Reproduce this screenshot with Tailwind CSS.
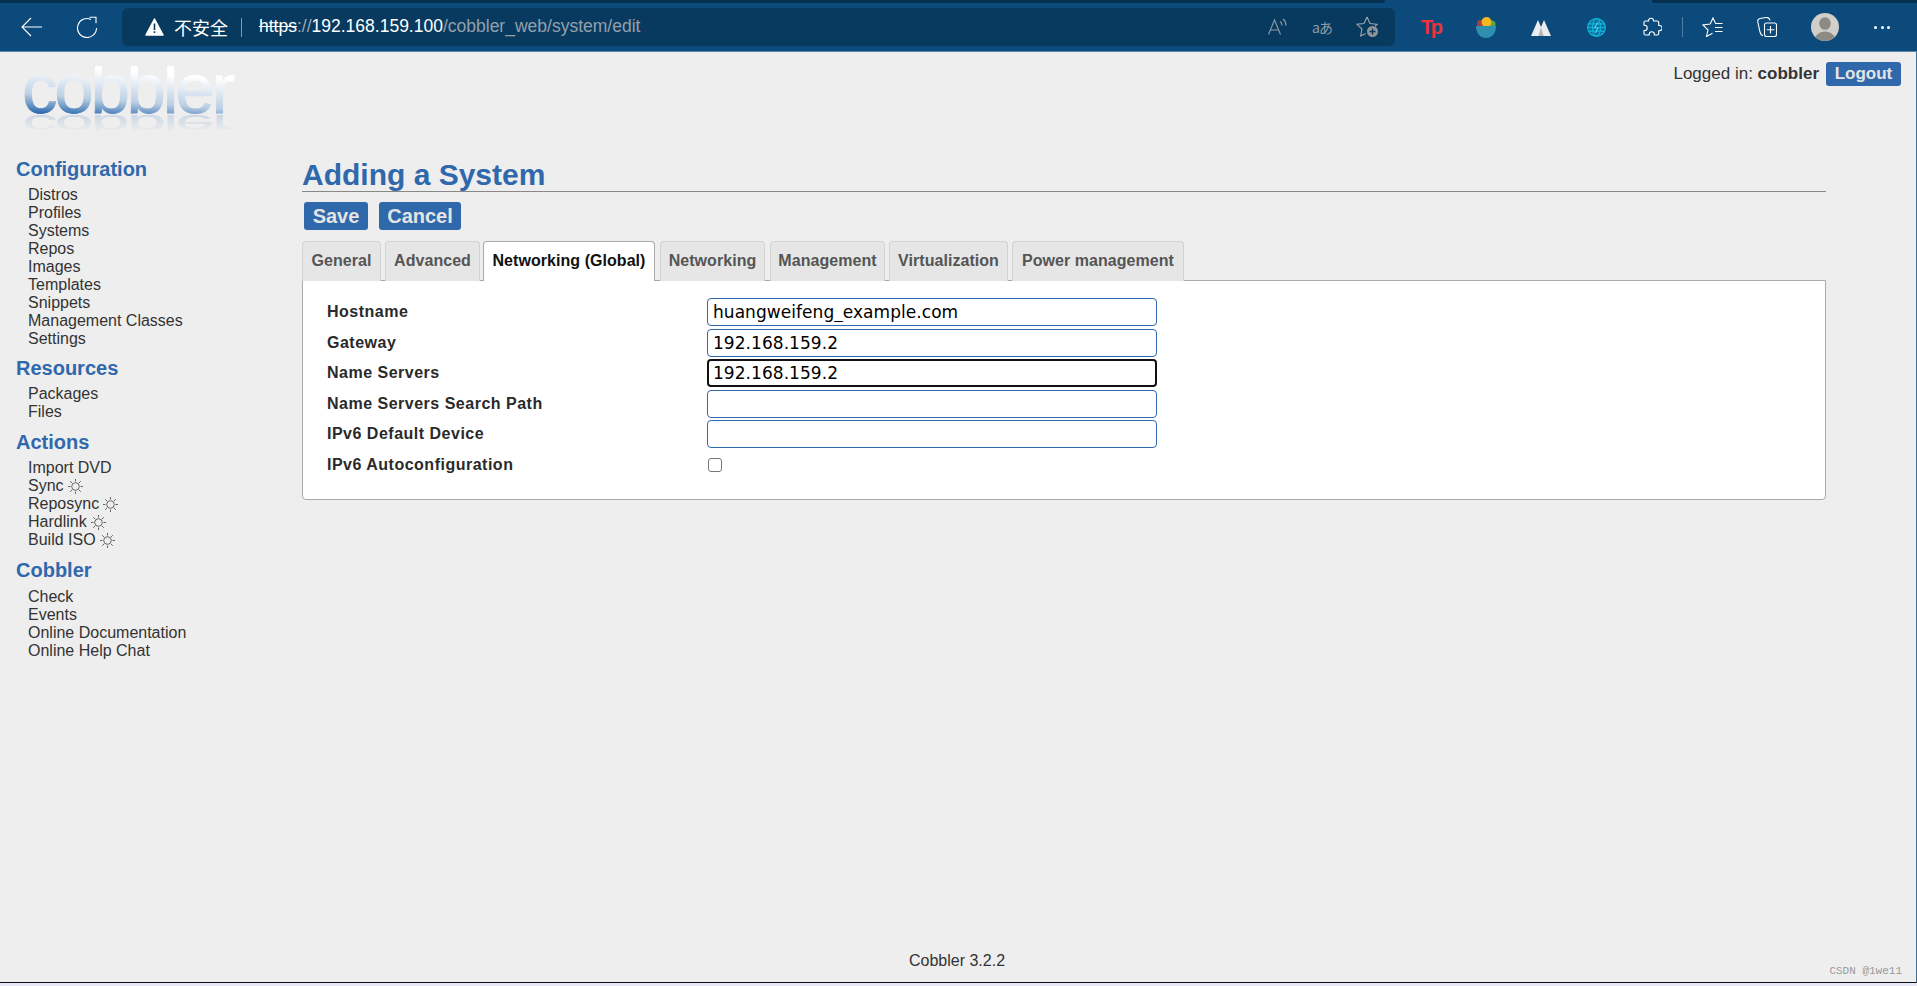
<!doctype html>
<html lang="zh">
<head>
<meta charset="utf-8">
<title>Adding a System</title>
<script src="https://cdn.jsdelivr.net/npm/@tailwindcss/browser@4"></script>
</head>
<body class="h-[986px] w-[1917px] overflow-hidden bg-[#eeeeee] font-['Liberation_Sans',Arial,sans-serif] text-[#333333]">
<div class="flex h-[986px] flex-col">
  <!-- browser chrome -->
  <header class="relative flex h-[52px] shrink-0 items-center border-b border-[#5d86a8] bg-[#0c4a7c] pt-[3px]">
    <div class="absolute left-0 top-0 h-[3px] w-[1385px] rounded-br-md bg-[#06304f]"></div>
    <div class="absolute right-0 top-0 h-[3px] w-[265px] rounded-bl-md bg-[#06304f]"></div>
    <div class="flex w-[122px] shrink-0 items-center pl-[21px]">
      <svg class="h-[20px] w-[21px]" viewBox="0 0 21 20" fill="none" stroke="#fff" stroke-width="1.1"><path d="M21 10H1M10 1L1 10l9 9"/></svg>
      <svg class="ml-[34px] h-[22px] w-[22px]" viewBox="0 0 22 22" fill="none" stroke="#fff" stroke-width="1.1"><path d="M20.500 12A9.500 9.500 0 1 1 15 3.400"/><path d="M13.500 1.200h6.500v6"/></svg>
    </div>
    <div class="flex h-[38px] w-[1273px] shrink-0 items-center rounded-md bg-[#083a60] pl-[23px] pr-[16px]">
      <svg class="h-[18px] w-[19px]" viewBox="0 0 19 18"><path fill="#fff" stroke="#fff" stroke-linejoin="round" stroke-width="1.500" d="M9.500 1L18 17H1Z"/><path fill="#083a60" d="M8.700 5.500h1.600v6.500H8.700zM8.700 13.200h1.600v1.800H8.700z"/></svg>
      <span class="ml-[10px] font-['Noto_Sans_CJK_SC',sans-serif] text-[18px] leading-none text-white">不安全</span>
      <span class="ml-[13px] h-[19px] w-px bg-[#7f9bb2]"></span>
      <span class="ml-[17px] whitespace-nowrap text-[17.500px] leading-none"><span class="text-white line-through">https</span><span class="text-[#9aa7b3]">://</span><span class="text-white">192.168.159.100</span><span class="text-[#93a0ac]">/cobbler_web/system/edit</span></span>
      <div class="ml-auto flex items-center">
        <svg class="h-[18px] w-[20px]" viewBox="0 0 20 18" fill="none" stroke="#8f9ca6" stroke-width="1.100"><path d="M0.500 16.500L6.500 2l6 14.500M2.500 12h8"/><path d="M12 3.500c1.500 1 2 2.500 2 4M15 1c2 1.500 3 4 3 6.500"/></svg>
        <span class="ml-[24px] w-[21px] whitespace-nowrap font-['Noto_Sans_CJK_JP',sans-serif] text-[14px] leading-none tracking-[-1px] text-[#8f9ca6]">aあ</span>
        <svg class="ml-[23px] h-[22px] w-[23px]" viewBox="0 0 23 22" fill="none" stroke="#a0a8ae" stroke-width="1.100"><path d="M11 1l-3 6.500-7 .8 5 4.700-1.400 7 5-2.500M11 1l3 6.500 7 .8-2 2"/><circle cx="16.500" cy="15.500" r="5.500" fill="#8f9499" stroke="none"/><path d="M16.500 12.500v6M13.500 15.500h6" stroke="#083a60" stroke-width="1.400"/></svg>
      </div>
    </div>
    <div class="flex flex-1 items-center">
      <span class="ml-[26px] w-[20px] whitespace-nowrap text-[20px] font-bold leading-none tracking-[-2.500px] text-[#ee3338]">Tp</span>
      <svg class="ml-[35px] h-[21px] w-[20px]" viewBox="0 0 20 21"><circle cx="5" cy="7" r="4" fill="#a8433f"/><circle cx="16" cy="7" r="3.500" fill="#5aa845"/><circle cx="10.500" cy="5" r="5" fill="#f2b81e"/><path fill="#2f8fae" d="M0 9h20c0 6-3 12-10 12S0 15 0 9z"/></svg>
      <svg class="ml-[35px] h-[17px] w-[20px]" viewBox="0 0 20 17"><path fill="#ececec" d="M0 17L7 1l3 7 3-7 7 16z"/><path fill="#b4b4b4" d="M7.500 17L10 8l2.500 9z"/></svg>
      <svg class="ml-[36px] h-[19px] w-[19px]" viewBox="0 0 19 19" fill="none" stroke="#10b4d8" stroke-width="1.200"><circle cx="9.500" cy="9.500" r="8.800" fill="#0c6f9e"/><ellipse cx="9.500" cy="9.500" rx="4" ry="8.800"/><path d="M1.500 5.800h16M1.500 13.200h16M0.700 9.500h17.600"/><path d="M11 4L7.500 10h3.500L8.500 15" stroke="#3fd0ee"/></svg>
      <svg class="ml-[36px] h-[20px] w-[20px]" viewBox="0 0 20 20" fill="none" stroke="#fff" stroke-width="1.100"><path d="M9 1.200c1.800 0 2.600 1.400 2.600 2.800h3.600a1.500 1.500 0 0 1 1.500 1.500v3h.8a2.600 2.600 0 0 1 0 5.200h-.8v2.800a1.500 1.500 0 0 1-1.500 1.500h-2.800v-.6a2.600 2.600 0 0 0-5.200 0v.6H3.500A1.500 1.500 0 0 1 2 16.500v-3h.6a2.600 2.600 0 0 0 0-5.200H2V5.500A1.500 1.500 0 0 1 3.500 4h3c0-1.400.7-2.800 2.500-2.800z"/></svg>
      <span class="ml-[20px] h-[20px] w-px bg-[#4f7da3]"></span>
      <svg class="ml-[19px] h-[20px] w-[21px]" viewBox="0 0 21 20" fill="none" stroke="#fff" stroke-width="1.100"><path d="M8.200 7L11 1l2.800 6M8.200 7L1 8l5 5-1.500 6.500 6-3.200"/><path d="M13 6.500h7.500M13 10.500h7.500M13 14.500h7.500"/></svg>
      <svg class="ml-[34px] h-[20px] w-[20px]" viewBox="0 0 20 20" fill="none" stroke="#fff" stroke-width="1.100"><path d="M6 18.800C4 18.300 3.500 17 3 15L.8 5C.5 3 1.500 1.800 3 1.500l6-1c2-.3 3.500.5 4 3"/><rect x="7.500" y="6" width="12" height="13.500" rx="2"/><path d="M13.500 9v7.500M9.800 12.700h7.500"/></svg>
      <span class="ml-[34px] h-[28px] w-[28px] overflow-hidden rounded-full bg-[#d1cfc9]"><svg class="h-[28px] w-[28px]" viewBox="0 0 28 28"><ellipse cx="14" cy="10.500" rx="5.800" ry="6.300" fill="#8d8a84"/><ellipse cx="14" cy="25" rx="9.500" ry="6.500" fill="#8d8a84"/></svg></span>
      <span class="ml-[35px] flex gap-[3.500px]"><i class="h-[3px] w-[3px] rounded-full bg-white"></i><i class="h-[3px] w-[3px] rounded-full bg-white"></i><i class="h-[3px] w-[3px] rounded-full bg-white"></i></span>
    </div>
  </header>

  <!-- page -->
  <div class="relative flex min-h-0 flex-1 flex-col border-r border-b border-r-[#3e6f96] border-b-[#111111]">
    <div class="flex h-[78px] shrink-0 justify-between">
      <svg class="ml-[16px] mt-[14px] h-[72px] w-[224px]" viewBox="0 0 224 72">
        <defs>
          <linearGradient id="lg" x1="0.2" y1="0" x2="0" y2="1"><stop offset="0.22" stop-color="#ffffff"/><stop offset="0.58" stop-color="#bcd0e4"/><stop offset="0.8" stop-color="#2f6cb0"/></linearGradient>
          <linearGradient id="lr" x1="0" y1="1" x2="0" y2="0"><stop offset="0.2" stop-color="#ccd8e5"/><stop offset="0.75" stop-color="#eeeeee"/></linearGradient>
        </defs>
        <text x="6" y="47" font-family="Liberation Sans" font-size="71" letter-spacing="-3.300" stroke="url(#lg)" stroke-width="0.800" fill="url(#lg)">cobbler</text>
        <text transform="translate(0 68) scale(1 -0.4)" x="6" y="48" font-family="Liberation Sans" font-size="71" letter-spacing="-3.300" fill="url(#lr)">cobbler</text>
      </svg>
      <div class="mr-[15px] mt-[10px] flex h-[24px] items-center text-[17px]">
        <span>Logged in: <b>cobbler</b></span>
        <a class="ml-[7px] flex h-[24px] w-[75px] items-center justify-center rounded-[3px] bg-[#3068ac] font-bold text-[#e4e4e4]">Logout</a>
      </div>
    </div>
    <div class="flex min-h-0 flex-1">
      <nav class="w-[302px] shrink-0 pl-[16px] pt-[27px]">
        <h2 class="text-[20px] font-bold leading-[24px] text-[#3068ac]">Configuration</h2>
        <ul class="pl-[12px] pt-[5px] text-[16px] leading-[18px]">
          <li>Distros</li><li>Profiles</li><li>Systems</li><li>Repos</li><li>Images</li><li>Templates</li><li>Snippets</li><li>Management Classes</li><li>Settings</li>
        </ul>
        <h2 class="mt-[8px] text-[20px] font-bold leading-[24px] text-[#3068ac]">Resources</h2>
        <ul class="pl-[12px] pt-[5px] text-[16px] leading-[18px]">
          <li>Packages</li><li>Files</li>
        </ul>
        <h2 class="mt-[9px] text-[20px] font-bold leading-[24px] text-[#3068ac]">Actions</h2>
        <ul class="pl-[12px] pt-[5px] text-[16px] leading-[18px]">
          <li>Import DVD</li>
          <li class="flex items-center gap-[4px]">Sync <svg class="h-[15px] w-[15px]" viewBox="0 0 15 15" fill="none" stroke="#555" stroke-width="0.900"><circle cx="7.500" cy="7.500" r="3.800"/><path d="M7.500 0v2.500M7.500 12.500V15M0 7.500h2.500M12.500 7.500H15M2.200 2.200L4 4M11 11l1.800 1.800M12.800 2.200L11 4M4 11l-1.800 1.800"/></svg></li>
          <li class="flex items-center gap-[4px]">Reposync <svg class="h-[15px] w-[15px]" viewBox="0 0 15 15" fill="none" stroke="#555" stroke-width="0.900"><circle cx="7.500" cy="7.500" r="3.800"/><path d="M7.500 0v2.500M7.500 12.500V15M0 7.500h2.500M12.500 7.500H15M2.200 2.200L4 4M11 11l1.800 1.800M12.800 2.200L11 4M4 11l-1.800 1.800"/></svg></li>
          <li class="flex items-center gap-[4px]">Hardlink <svg class="h-[15px] w-[15px]" viewBox="0 0 15 15" fill="none" stroke="#555" stroke-width="0.900"><circle cx="7.500" cy="7.500" r="3.800"/><path d="M7.500 0v2.500M7.500 12.500V15M0 7.500h2.500M12.500 7.500H15M2.200 2.200L4 4M11 11l1.800 1.800M12.800 2.200L11 4M4 11l-1.800 1.800"/></svg></li>
          <li class="flex items-center gap-[4px]">Build ISO <svg class="h-[15px] w-[15px]" viewBox="0 0 15 15" fill="none" stroke="#555" stroke-width="0.900"><circle cx="7.500" cy="7.500" r="3.800"/><path d="M7.500 0v2.500M7.500 12.500V15M0 7.500h2.500M12.500 7.500H15M2.200 2.200L4 4M11 11l1.800 1.800M12.800 2.200L11 4M4 11l-1.800 1.800"/></svg></li>
        </ul>
        <h2 class="mt-[9px] text-[20px] font-bold leading-[24px] text-[#3068ac]">Cobbler</h2>
        <ul class="pl-[12px] pt-[6px] text-[16px] leading-[18px]">
          <li>Check</li><li>Events</li><li>Online Documentation</li><li>Online Help Chat</li>
        </ul>
      </nav>
      <main class="w-[1524px] shrink-0 pt-[24px]">
        <h1 class="h-[38px] border-b border-[#888888] pt-[4px] text-[30px] font-bold leading-[33px] text-[#3068ac]">Adding a System</h1>
        <div class="flex gap-[11px] pl-[2px] pt-[10px]">
          <button class="flex h-[28px] w-[64px] items-center justify-center rounded-[3px] bg-[#3068ac] text-[20px] font-bold text-[#e4e4e4]">Save</button>
          <button class="flex h-[28px] w-[82px] items-center justify-center rounded-[3px] bg-[#3068ac] text-[20px] font-bold text-[#e4e4e4]">Cancel</button>
        </div>
        <div class="relative z-10 mt-[11px] flex h-[40px] items-stretch text-[16px] font-bold tracking-[0.05px] text-[#555555]">
          <span class="flex w-[79px] items-center justify-center rounded-t-[4px] border border-b-0 border-[#d3d3d3] bg-[#e6e6e6] pb-[2px]">General</span>
          <span class="ml-[4px] flex w-[95px] items-center justify-center rounded-t-[4px] border border-b-0 border-[#d3d3d3] bg-[#e6e6e6] pb-[2px]">Advanced</span>
          <span class="ml-[3px] flex w-[172px] items-center justify-center rounded-t-[4px] border border-b-0 border-[#aaaaaa] bg-white pb-[2px] text-[#111111]">Networking (Global)</span>
          <span class="ml-[5px] flex w-[105px] items-center justify-center rounded-t-[4px] border border-b-0 border-[#d3d3d3] bg-[#e6e6e6] pb-[2px]">Networking</span>
          <span class="ml-[5px] flex w-[115px] items-center justify-center rounded-t-[4px] border border-b-0 border-[#d3d3d3] bg-[#e6e6e6] pb-[2px]">Management</span>
          <span class="ml-[4px] flex w-[119px] items-center justify-center rounded-t-[4px] border border-b-0 border-[#d3d3d3] bg-[#e6e6e6] pb-[2px]">Virtualization</span>
          <span class="ml-[4px] flex w-[172px] items-center justify-center rounded-t-[4px] border border-b-0 border-[#d3d3d3] bg-[#e6e6e6] pb-[2px]">Power management</span>
        </div>
        <section class="-mt-px h-[220px] rounded-b-[4px] border border-[#aaaaaa] bg-white pl-[24px] pt-[16px] text-[16px] font-bold tracking-[0.5px] text-[#2a2a2a]">
          <div class="grid grid-cols-[380px_450px] auto-rows-[30.500px] items-center">
            <label>Hostname</label><input class="h-[28px] w-[450px] rounded-[4px] border border-[#3068ac] bg-white px-[5px] font-['DejaVu_Sans'] text-[17px] font-normal tracking-[0.05px] text-black" value="huangweifeng_example.com">
            <label>Gateway</label><input class="h-[28px] w-[450px] rounded-[4px] border border-[#3068ac] bg-white px-[5px] font-['DejaVu_Sans'] text-[17px] font-normal tracking-[0.05px] text-black" value="192.168.159.2">
            <label>Name Servers</label><input class="h-[28px] w-[450px] rounded-[4px] border-2 border-[#111111] bg-white px-[4px] font-['DejaVu_Sans'] text-[17px] font-normal tracking-[0.05px] text-black" value="192.168.159.2">
            <label>Name Servers Search Path</label><input class="h-[28px] w-[450px] rounded-[4px] border border-[#3068ac] bg-white" value="">
            <label>IPv6 Default Device</label><input class="h-[28px] w-[450px] rounded-[4px] border border-[#3068ac] bg-white" value="">
            <label>IPv6 Autoconfiguration</label><span class="ml-px h-[14px] w-[14px] rounded-[3px] border border-[#767676] bg-white"></span>
          </div>
        </section>
      </main>
    </div>
    <footer class="h-[30px] shrink-0 pr-[2px] text-center text-[16px] leading-[18px]">Cobbler 3.2.2</footer>
    <span class="absolute bottom-[5px] right-[14px] font-['Liberation_Mono'] text-[11px] leading-none text-[#9a9a9a]">CSDN @1we11</span>
  </div>
  <div class="h-[3px] shrink-0 bg-[#e6e8f5]"></div>
</div>
</body>
</html>
